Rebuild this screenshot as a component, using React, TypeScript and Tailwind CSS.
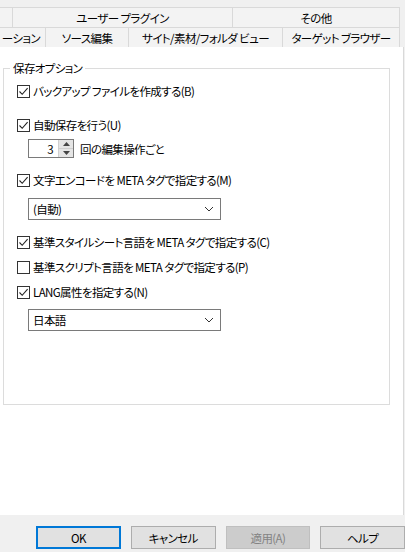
import React from "react";

const font = "[font-family:'Noto_Sans_CJK_JP','Noto_Sans',sans-serif]";
const txt = "text-[11.5px] leading-[14px] tracking-[-0.6px]";

function CheckBox({ checked }: { checked: boolean }) {
  return (
    <span className="w-[13px] h-[13px] border border-[#333333] bg-white flex items-center justify-center shrink-0">
      {checked && (
        <svg width="11" height="11" viewBox="0 0 11 11">
          <path d="M1.5 5.5 L4.2 8.3 L9.6 2.2" fill="none" stroke="#222" strokeWidth="1.1" />
        </svg>
      )}
    </span>
  );
}

function CheckRow({ label, checked, className = "" }: { label: string; checked: boolean; className?: string }) {
  return (
    <div className={`flex items-center gap-[3px] pl-[13px] ${className}`}>
      <CheckBox checked={checked} />
      <span className={`${txt} text-black whitespace-nowrap`}>{label}</span>
    </div>
  );
}

function Select({ value }: { value: string }) {
  return (
    <div className="ml-[24px] w-[193px] h-[22px] border border-[#7a7a7a] bg-white flex items-center justify-between pl-[4px] pr-[6px]">
      <span className={`${txt} text-black`}>{value}</span>
      <svg width="10" height="6" viewBox="0 0 10 6">
        <path d="M1 1 L5 5 L9 1" fill="none" stroke="#333" strokeWidth="1" />
      </svg>
    </div>
  );
}

function Tab({ label, className = "" }: { label: string; className?: string }) {
  return (
    <div
      className={`h-[20px] flex items-center justify-center border-r border-t border-[#d9d9d9] bg-[#f3f3f3] ${txt} text-black whitespace-nowrap overflow-hidden ${className}`}
    >
      {label}
    </div>
  );
}

function Button({ label, kind = "normal" }: { label: string; kind?: "default" | "normal" | "disabled" }) {
  const styles =
    kind === "default"
      ? "border-2 border-[#0078d7] bg-[#e1e1e1] text-black"
      : kind === "disabled"
      ? "border border-[#bfbfbf] bg-[#cccccc] text-[#838383]"
      : "border border-[#adadad] bg-[#e1e1e1] text-black";
  return (
    <div className={`w-[85px] h-[23px] flex items-center justify-center ${txt} ${styles}`}>
      {label}
    </div>
  );
}

export default function App() {
  return (
    <div className={`w-[405px] h-[552px] bg-[#f0f0f0] overflow-hidden flex flex-col ${font} [font-feature-settings:'palt']`}>
      {/* Tab rows */}
      <div className="pt-[7px]">
        <div className="flex">
          <Tab label="" className="w-[13px]" />
          <Tab label="ユーザー プラグイン" className="w-[220px]" />
          <Tab label="その他" className="w-[167px]" />
        </div>
        <div className="flex">
          <Tab label="ーション" className="w-[46px] justify-end pr-[5px]" />
          <Tab label="ソース編集" className="w-[83px]" />
          <Tab label="サイト/素材/フォルダ ビュー" className="w-[154px]" />
          <Tab label="ターゲット ブラウザー" className="w-[117px]" />
        </div>
      </div>

      {/* Panel */}
      <div className="w-[404px] h-[468px] bg-white border-r border-[#d9d9d9] pt-[21px] pl-[3px]">
        <div className="relative w-[387px] h-[337px] border border-[#dcdcdc]">
          <span className={`absolute -top-[8px] left-[6px] bg-white px-[3px] ${txt} text-black`}>
            保存オプション
          </span>
          <div className="flex flex-col pt-[15px]">
            <CheckRow checked label="バックアップ ファイルを作成する(B)" />
            <CheckRow checked label="自動保存を行う(U)" className="mt-[20px]" />
            <div className="flex items-center mt-[7px] ml-[24px]">
              <div className="w-[46px] h-[19px] border border-[#7a7a7a] bg-white flex items-center">
                <span className={`flex-1 text-right pr-[5px] ${txt} text-black`}>3</span>
                <div className="w-[15px] h-full flex flex-col border-l border-[#cfcfcf]">
                  <div className="flex-1 bg-[#e5e5e5] flex items-center justify-center border-b border-[#cfcfcf]">
                    <svg width="7" height="4" viewBox="0 0 7 4">
                      <path d="M0 4 L3.5 0 L7 4 Z" fill="#444" />
                    </svg>
                  </div>
                  <div className="flex-1 bg-[#e5e5e5] flex items-center justify-center">
                    <svg width="7" height="4" viewBox="0 0 7 4">
                      <path d="M0 0 L3.5 4 L7 0 Z" fill="#444" />
                    </svg>
                  </div>
                </div>
              </div>
              <span className={`ml-[6px] ${txt} text-black`}>回の編集操作ごと</span>
            </div>
            <CheckRow checked label="文字エンコードを META タグで指定する(M)" className="mt-[15px]" />
            <div className="mt-[11px]">
              <Select value="(自動)" />
            </div>
            <CheckRow checked label="基準スタイルシート言語を META タグで指定する(C)" className="mt-[15px]" />
            <CheckRow checked={false} label="基準スクリプト言語を META タグで指定する(P)" className="mt-[11px]" />
            <CheckRow checked label="LANG属性を指定する(N)" className="mt-[11px]" />
            <div className="mt-[10px]">
              <Select value="日本語" />
            </div>
          </div>
        </div>
      </div>

      {/* Buttons */}
      <div className="flex gap-[10px] pl-[36px] pt-[11px]">
        <Button label="OK" kind="default" />
        <Button label="キャンセル" />
        <Button label="適用(A)" kind="disabled" />
        <Button label="ヘルプ" />
      </div>
    </div>
  );
}
